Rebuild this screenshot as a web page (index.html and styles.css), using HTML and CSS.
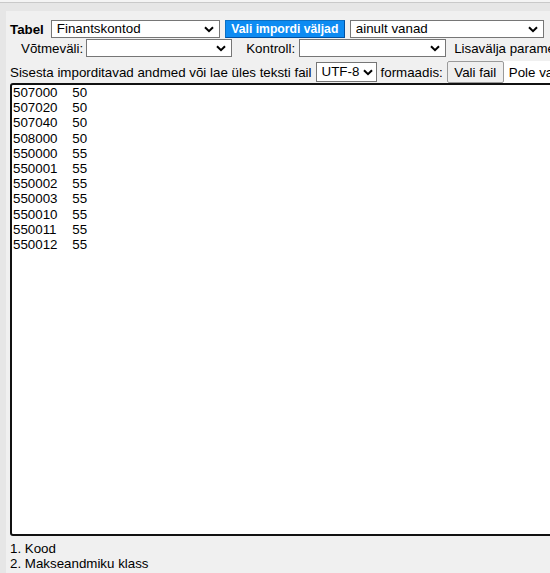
FILE: index.html
```html
<!DOCTYPE html>
<html>
<head>
<meta charset="utf-8">
<link rel="stylesheet" href="styles.css">
</head>
<body>
<div class="topstrip"></div>
<div class="panel">
  <div class="row row1">
    <label class="lbl-bold">Tabel</label>
    <div class="sel w169">
      <select><option>Finantskontod</option></select>
      <svg class="chev" width="10" height="7" viewBox="0 0 10 7"><path d="M1 1.2 L5 5.2 L9 1.2" fill="none" stroke="#000" stroke-width="2"/></svg>
    </div>
    <button class="btn-blue">Vali impordi väljad</button>
    <div class="sel w194">
      <select><option>ainult vanad</option></select>
      <svg class="chev" width="10" height="7" viewBox="0 0 10 7"><path d="M1 1.2 L5 5.2 L9 1.2" fill="none" stroke="#000" stroke-width="2"/></svg>
    </div>
  </div>
  <div class="row row2">
    <span class="lbl ind">Võtmeväli:</span>
    <div class="sel w146">
      <select><option></option></select>
      <svg class="chev" width="10" height="7" viewBox="0 0 10 7"><path d="M1 1.2 L5 5.2 L9 1.2" fill="none" stroke="#000" stroke-width="2"/></svg>
    </div>
    <span class="lbl kontroll">Kontroll:</span>
    <div class="sel w147">
      <select><option></option></select>
      <svg class="chev" width="10" height="7" viewBox="0 0 10 7"><path d="M1 1.2 L5 5.2 L9 1.2" fill="none" stroke="#000" stroke-width="2"/></svg>
    </div>
    <span class="lbl lisa">Lisavälja parameetrid</span>
  </div>
  <div class="row row3">
    <span class="lbl">Sisesta imporditavad andmed või lae üles teksti fail</span>
    <div class="sel w61 h20">
      <select><option>UTF-8</option></select>
      <svg class="chev" width="10" height="7" viewBox="0 0 10 7"><path d="M1 1.2 L5 5.2 L9 1.2" fill="none" stroke="#000" stroke-width="2"/></svg>
    </div>
    <span class="lbl fmt">formaadis:</span>
    <span class="file">
      <button class="btn-file">Vali fail</button>
      <span class="file-name">Pole valitud ühtegi faili</span>
    </span>
  </div>
  <textarea class="data">507000	50
507020	50
507040	50
508000	50
550000	55
550001	55
550002	55
550003	55
550010	55
550011	55
550012	55
</textarea>
  <div class="legend">
    <div>1. Kood</div>
    <div>2. Makseandmiku klass</div>
  </div>
</div>
</body>
</html>
```
FILE: styles.css
```css
html, body {
  margin: 0;
  padding: 0;
}
body {
  background: #e6e6e6;
  font-family: "Liberation Sans", Arial, sans-serif;
  font-size: 13.33px;
  color: #000;
  width: 550px;
  height: 573px;
  overflow: hidden;
}
.topstrip {
  height: 2px;
  background: #f4f4f4;
  border-bottom: 1px solid #c9c9c9;
}
.panel {
  margin: 8px 0 0 6px;
  width: 760px;
  height: 600px;
  background: #f0f0f0;
  padding: 9px 0 0 4px;
  box-sizing: border-box;
}
.row {
  display: flex;
  align-items: center;
  white-space: nowrap;
}
.row1 {
  height: 18px;
}
.row2 {
  height: 18px;
  margin-top: 1px;
}
.row3 {
  height: 22px;
  margin-top: 4px;
}
.lbl-bold {
  font-weight: bold;
  margin-right: 7px;
}
.lbl {
  line-height: 15px;
}
.ind {
  margin-left: 11px;
  margin-right: 3px;
}
.kontroll {
  margin-left: 14px;
  margin-right: 4px;
}
.lisa {
  margin-left: 8px;
}
.fmt {
  margin-left: 4px;
  margin-right: 4px;
}
.sel {
  position: relative;
  height: 18px;
  box-sizing: border-box;
}
.sel select {
  appearance: none;
  -webkit-appearance: none;
  width: 100%;
  height: 100%;
  margin: 0;
  border: 1px solid #767676;
  border-radius: 0;
  background: #fff;
  font-family: "Liberation Sans", Arial, sans-serif;
  font-size: 13.33px;
  color: #000;
  padding: 0 0 0 5px;
  line-height: 16px;
  box-sizing: border-box;
}
.sel .chev {
  position: absolute;
  right: 6px;
  top: 6px;
  pointer-events: none;
}
.h20 { height: 20px; }
.h20 .chev { top: 7px; right: 4px; }
.w169 { width: 169px; }
.w194 { width: 194px; margin-left: 5px; }
.w146 { width: 146px; }
.w147 { width: 147px; }
.w61 { width: 61px; margin-left: 4px; }
.btn-blue {
  margin: 0 0 0 5px;
  height: 18px;
  width: 120px;
  padding: 0;
  background: #0d8bf2;
  color: #fff;
  font-family: "Liberation Sans", Arial, sans-serif;
  font-size: 12.2px;
  font-weight: bold;
  border: 1px solid #0a6fc4;
  border-right-color: #0050a0;
  border-bottom-color: #0050a0;
  border-radius: 0;
  line-height: 15px;
  box-sizing: border-box;
  white-space: nowrap;
}
.file {
  display: flex;
  align-items: center;
  height: 22px;
  background: #fff;
}
.btn-file {
  height: 22px;
  width: 57px;
  margin: 0;
  padding: 0;
  background: #efefef;
  border: 1px solid #9a9a9a;
  border-radius: 2px;
  font-family: "Liberation Sans", Arial, sans-serif;
  font-size: 13.33px;
  color: #000;
  box-sizing: border-box;
}
.file-name {
  margin-left: 5px;
  line-height: 15px;
}
.data {
  display: block;
  margin: 0;
  width: 700px;
  height: 453px;
  box-sizing: border-box;
  border: 2px solid #111;
  border-radius: 3px;
  background: #fff;
  padding: 0 1px;
  font-family: "Liberation Sans", Arial, sans-serif;
  font-size: 13.33px;
  line-height: 15.2px;
  color: #000;
  resize: none;
  outline: none;
  overflow: hidden;
  tab-size: 8;
}
.legend {
  margin-top: 5px;
  line-height: 15px;
}
```
